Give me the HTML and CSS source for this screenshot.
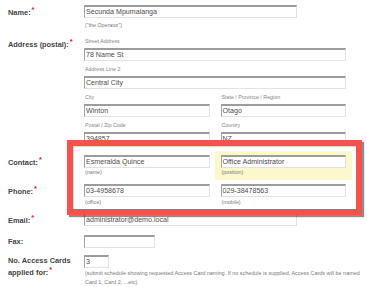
FILE: index.html
```html
<!DOCTYPE html>
<html>
<head>
<meta charset="utf-8">
<link rel="stylesheet" href="styles.css">
</head>
<body>
<div class="form">
  <div class="row row-name">
    <div class="label">Name:<span class="req">*</span></div>
    <div class="field">
      <div class="input w-name">Secunda Mpumalanga</div>
      <div class="note note-name">("the Operator")</div>
    </div>
  </div>

  <div class="row row-address">
    <div class="label">Address (postal):<span class="req">*</span></div>
    <div class="field groups">
      <div class="cell">
        <div class="sub">Street Address</div>
        <div class="input">78 Name St</div>
      </div>
      <div class="cell">
        <div class="sub">Address Line 2</div>
        <div class="input">Central City</div>
      </div>
      <div class="two">
        <div class="cell">
          <div class="sub">City</div>
          <div class="input">Winton</div>
        </div>
        <div class="cell">
          <div class="sub">State / Province / Region</div>
          <div class="input">Otago</div>
        </div>
      </div>
      <div class="two">
        <div class="cell">
          <div class="sub">Postal / Zip Code</div>
          <div class="input">394857</div>
        </div>
        <div class="cell">
          <div class="sub">Country</div>
          <div class="input">NZ</div>
        </div>
      </div>
    </div>
  </div>

  <div class="row row-contact">
    <div class="label">Contact:<span class="req">*</span></div>
    <div class="field two">
      <div class="cell">
        <div class="input">Esmeralda Quince</div>
        <div class="note tight">(name)</div>
      </div>
      <div class="cell highlight">
        <div class="input">Office Administrator</div>
        <div class="note tight">(position)</div>
      </div>
    </div>
  </div>

  <div class="row row-phone">
    <div class="label">Phone:<span class="req">*</span></div>
    <div class="field two">
      <div class="cell">
        <div class="input">03-4958678</div>
        <div class="note tight1">(office)</div>
      </div>
      <div class="cell">
        <div class="input">029-38478563</div>
        <div class="note tight1">(mobile)</div>
      </div>
    </div>
  </div>

  <div class="row row-email">
    <div class="label">Email:<span class="req">*</span></div>
    <div class="field">
      <div class="input w-name">administrator@demo.local</div>
    </div>
  </div>

  <div class="row row-fax">
    <div class="label">Fax:</div>
    <div class="field">
      <div class="input w-fax"></div>
    </div>
  </div>

  <div class="row row-cards">
    <div class="label">No. Access Cards<br>applied for:<span class="req">*</span></div>
    <div class="field">
      <div class="input w-cards">3</div>
      <div class="note long">(submit schedule showing requested Access Card naming. If no schedule is supplied, Access Cards will be named<br>Card 1, Card 2, ...etc)</div>
    </div>
  </div>

  <div class="callout" aria-hidden="true"></div>
</div>
</body>
</html>
```
FILE: styles.css
```css
html, body {
  margin: 0;
  padding: 0;
  background: #ffffff;
}

body {
  font-family: "Liberation Sans", Arial, sans-serif;
  width: 367px;
  height: 287px;
  overflow: hidden;
}

.form {
  position: relative;
  padding: 5px 0 0 8px;
}

.row {
  display: grid;
  grid-template-columns: 76px 283px;
}

.label {
  font-weight: bold;
  font-size: 7.4px;
  line-height: 11px;
  color: #454545;
  padding-top: 1px;
}

.row-cards .label {
  padding-top: 0;
}

.req {
  color: #e0161b;
  font-size: 7.5px;
  margin-left: 1px;
  vertical-align: 3px;
  line-height: 1;
}

.input {
  box-sizing: border-box;
  height: 13px;
  width: 100%;
  background: #fff;
  border-top: 2px solid #9c9c9c;
  border-left: 1px solid #a4a4a4;
  border-right: 1px solid #e2e2e2;
  border-bottom: 1px solid #e2e2e2;
  font-size: 7.1px;
  line-height: 10px;
  color: #4d4d4d;
  padding-left: 1px;
  white-space: nowrap;
  overflow: hidden;
}

.w-name { width: 213px; }
.w-fax { width: 71px; }
.w-cards { width: 25px; }

.note, .sub {
  font-size: 5.3px;
  color: #7a7a7a;
  line-height: 8px;
  padding-left: 1px;
  white-space: nowrap;
}

.sub {
  margin-bottom: 3px;
  color: #858585;
}

.note-name { margin-top: 3px; }
.note.tight { margin-top: 0; }
.note.tight1 { margin-top: 1px; }

.note.long {
  margin-top: 1px;
  line-height: 9px;
  font-size: 5.45px;
}

.groups {
  display: flex;
  flex-direction: column;
  gap: 4px;
  width: 262px;
}

.two {
  display: grid;
  grid-template-columns: 1fr 1fr;
  column-gap: 11px;
  width: 262px;
}

.row-address { margin-top: 8px; }
.row-contact { margin-top: 10px; }
.row-phone { margin-top: 8px; }
.row-email { margin-top: 7px; }
.row-fax { margin-top: 9px; }
.row-cards { margin-top: 7px; }

.highlight {
  background: #fdf8cc;
  padding: 4px 6px;
  margin: -4px -6px;
}

.callout {
  position: absolute;
  left: 67px;
  top: 140px;
  width: 295px;
  height: 75px;
  box-sizing: border-box;
  border: 6px solid #f4524a;
  box-shadow: 2px 2px 1px rgba(0, 0, 0, 0.45), inset 1px 1px 1px rgba(0, 0, 0, 0.18);
  pointer-events: none;
}
```
